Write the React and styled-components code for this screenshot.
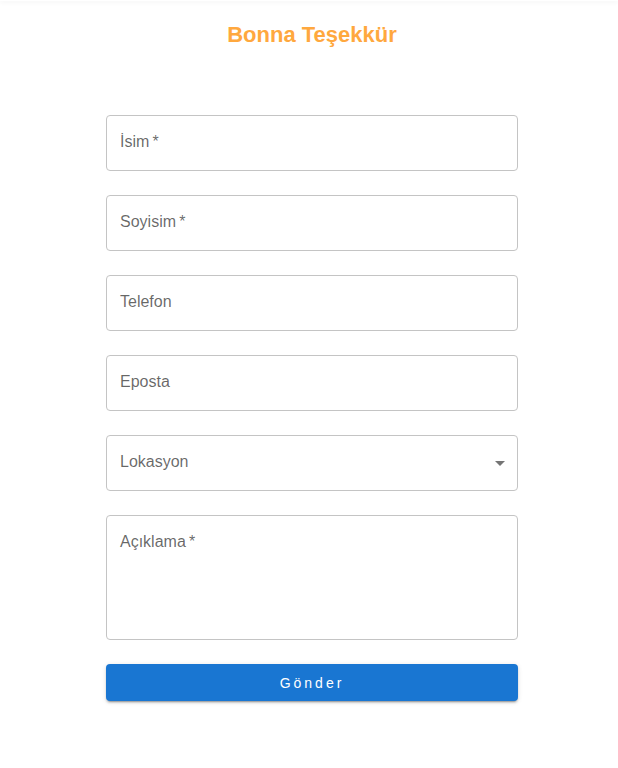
import React from 'react';
import styled, { createGlobalStyle } from 'styled-components';

const GlobalStyle = createGlobalStyle`
    body {
        margin: 0;
        background: #fff;
        font-family: "Liberation Sans", Arial, sans-serif;
    }
`;

const TopBar = styled.div`
    height: 1px;
    box-shadow: 0 1px 4px rgba(0, 0, 0, 0.12);
`;

const Page = styled.div`
    padding: 0 0 40px 6px;
    display: flex;
    flex-direction: column;
    align-items: center;
`;

const Title = styled.h1`
    margin: 22px 0 0;
    font-size: 22px;
    font-weight: 700;
    color: #ffa83e;
    line-height: 24px;
`;

const Form = styled.form`
    width: 412px;
    margin-top: 68px;
    display: flex;
    flex-direction: column;
    gap: 24px;
`;

const Field = styled.div`
    box-sizing: border-box;
    height: ${p => (p.$tall ? 125 : 56)}px;
    border: 1px solid #c4c4c4;
    border-radius: 4px;
    padding: ${p => (p.$tall ? '16px 14px 0 13px' : '0 14px 3px 13px')};
    display: flex;
    align-items: ${p => (p.$tall ? 'flex-start' : 'center')};
    justify-content: space-between;
`;

const Label = styled.span`
    font-size: 16px;
    color: rgba(0, 0, 0, 0.6);
    line-height: 19px;
`;

const Caret = styled.span`
    width: 0;
    height: 0;
    margin: 3px -2px 0 0;
    border-left: 5px solid transparent;
    border-right: 5px solid transparent;
    border-top: 5px solid #757575;
`;

const Submit = styled.button`
    height: 37px;
    border: none;
    border-radius: 4px;
    background: #1976d2;
    color: #fff;
    font-family: "Liberation Sans", Arial, sans-serif;
    font-size: 14px;
    font-weight: 500;
    letter-spacing: 3px;
    box-shadow: 0 3px 1px -2px rgba(0, 0, 0, 0.2), 0 2px 2px 0 rgba(0, 0, 0, 0.14),
        0 1px 5px 0 rgba(0, 0, 0, 0.12);
`;

const fields = [
    { label: 'İsim', required: true },
    { label: 'Soyisim', required: true },
    { label: 'Telefon' },
    { label: 'Eposta' },
    { label: 'Lokasyon', select: true },
    { label: 'Açıklama', required: true, tall: true },
];

export default function App() {
    return (
        <>
            <GlobalStyle />
            <TopBar />
            <Page>
                <Title>Bonna Teşekkür</Title>
                <Form onSubmit={e => e.preventDefault()}>
                    {fields.map(f => (
                        <Field key={f.label} $tall={f.tall}>
                            <Label>
                                {f.label}
                                {f.required && '\u2009*'}
                            </Label>
                            {f.select && <Caret />}
                        </Field>
                    ))}
                    <Submit type="submit">Gönder</Submit>
                </Form>
            </Page>
        </>
    );
}
